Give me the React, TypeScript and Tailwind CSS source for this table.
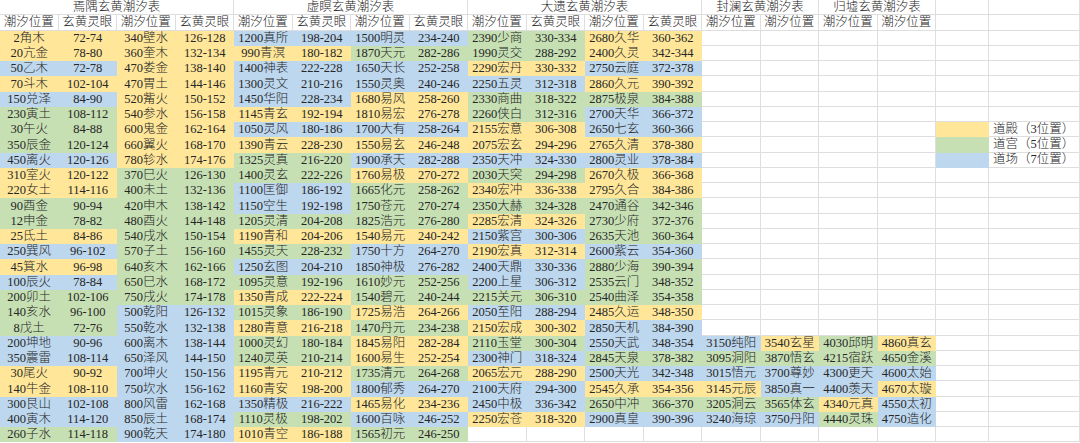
import React from 'react';

// 每行：名称 灵眼 颜色 名称 灵眼 颜色   (y=道殿 g=道宫 b=道场)
const yanyu = [
  '2角木 72-74 y 340壁水 126-128 y',
  '20亢金 78-80 y 360奎木 132-134 y',
  '50乙木 72-78 b 470娄金 138-140 y',
  '70斗木 102-104 y 470胃土 144-146 y',
  '150兑泽 84-90 b 520觜火 150-152 y',
  '230寅土 108-112 g 540参水 156-158 y',
  '30午火 84-88 g 600鬼金 162-164 y',
  '350辰金 120-124 g 660翼火 168-170 y',
  '450离火 120-126 b 780轸水 174-176 y',
  '310室火 120-122 y 370巳火 126-130 g',
  '220女土 114-116 y 400未土 132-136 g',
  '90酉金 90-94 g 420申木 138-142 g',
  '12申金 78-82 g 480酉火 144-148 g',
  '25氐土 84-86 y 540戌水 150-154 g',
  '250巽风 96-102 b 570子土 156-160 g',
  '45箕水 96-98 y 640亥木 162-166 g',
  '100辰火 78-84 b 650巳水 168-172 g',
  '200卯土 102-106 g 750戌火 174-178 g',
  '140亥水 96-100 g 500乾阳 126-132 b',
  '8戊土 72-76 g 550乾水 132-138 b',
  '200坤地 90-96 b 600离木 138-144 b',
  '350震雷 108-114 b 650泽风 144-150 b',
  '30尾火 90-92 y 700坤火 150-156 b',
  '140牛金 108-110 y 750坎水 156-162 b',
  '300艮山 102-108 b 800风雷 162-168 b',
  '400寅木 114-120 b 850辰土 168-174 b',
  '260子水 114-118 g 900乾天 174-180 b',
];

const xuming = [
  '1200真所 198-204 b 1500明灵 234-240 b',
  '990青溟 180-182 y 1870天元 282-286 g',
  '1400神表 222-228 b 1650天长 252-258 b',
  '1300灵文 210-216 b 1550灵奥 240-246 b',
  '1450华阳 228-234 b 1680易风 258-260 y',
  '1145青玄 192-194 y 1810易宏 276-278 y',
  '1050灵风 180-186 b 1700大有 258-264 b',
  '1390青云 228-230 y 1550易玄 246-248 y',
  '1325灵真 216-220 g 1900承天 282-288 b',
  '1400灵玄 222-226 g 1760易极 270-272 y',
  '1100匡御 186-192 b 1665化元 258-262 g',
  '1150空生 192-198 b 1750苍元 270-274 g',
  '1205灵清 204-208 g 1825浩元 276-280 g',
  '1190青和 204-206 y 1540易元 240-242 y',
  '1455灵天 228-232 g 1750十方 264-270 b',
  '1250玄图 204-210 b 1850神极 276-282 b',
  '1095灵意 192-196 g 1610妙元 252-256 g',
  '1350青成 222-224 y 1540碧元 240-244 g',
  '1015灵象 186-190 g 1725易浩 264-266 y',
  '1280青意 216-218 y 1470丹元 234-238 g',
  '1000灵幻 180-184 g 1845易阳 282-284 y',
  '1240灵英 210-214 g 1600易生 252-254 y',
  '1195青元 210-212 y 1735清元 264-268 g',
  '1160青安 198-200 y 1800郁秀 264-270 b',
  '1350精极 216-222 b 1465易化 234-236 y',
  '1110灵极 198-202 g 1600百咏 246-252 b',
  '1010青空 186-188 y 1565初元 246-250 g',
];

const dayi = [
  '2390少商 330-334 g 2680久华 360-362 y',
  '1990灵交 288-292 g 2400久灵 342-344 y',
  '2290宏丹 330-332 y 2750云庭 372-378 b',
  '2250五灵 312-318 b 2860久元 390-392 y',
  '2330商曲 318-322 g 2875极泉 384-388 g',
  '2260侠白 312-316 g 2700天华 366-372 b',
  '2155宏意 306-308 y 2650七玄 360-366 b',
  '2075宏玄 294-296 y 2765久清 378-380 y',
  '2350天冲 324-330 b 2800灵业 378-384 b',
  '2030天突 294-298 g 2670久极 366-368 y',
  '2340宏冲 336-338 y 2795久合 384-386 y',
  '2350大赫 324-328 g 2470通谷 342-346 g',
  '2285宏清 324-326 y 2730少府 372-376 g',
  '2150紫宫 300-306 b 2635天池 360-364 g',
  '2190宏真 312-314 y 2600紫云 354-360 b',
  '2400天鼎 330-336 b 2880少海 390-394 g',
  '2200上星 306-312 b 2535云门 348-352 g',
  '2215关元 306-310 g 2540曲泽 354-358 g',
  '2050至阳 288-294 b 2485久运 348-350 y',
  '2150宏成 300-302 y 2850天机 384-390 b',
  '2110玉堂 300-304 g 2550天武 348-354 b',
  '2300神门 318-324 b 2845天泉 378-382 g',
  '2065宏元 288-290 y 2500天光 342-348 b',
  '2100天府 294-300 b 2545久承 354-356 y',
  '2450中极 336-342 b 2650中冲 366-370 g',
  '2250宏苍 318-320 y 2900真皇 390-396 b',
  '',
];

// 封澜 / 归墟：从第21行开始
const fenglan = [
  '3150纯阳 b 3540玄星 y 4030邱明 g 4860真玄 y',
  '3095洞阳 g 3870悟玄 g 4215宿跃 g 4650金溪 g',
  '3015悟元 b 3700尊妙 b 4300更天 b 4600太始 b',
  '3145元辰 y 3850真一 b 4400羡天 b 4670太璇 y',
  '3205洞云 g 3565体玄 g 4340元真 y 4550太初 b',
  '3240海琼 b 3750丹阳 b 4440灵珠 g 4750造化 b',
];

const legend: Record<number, [string, string]> = {
  6: ['y', '道殿（3位置）'],
  7: ['g', '道宫（5位置）'],
  8: ['b', '道场（7位置）'],
};

const bg: Record<string, string> = {
  y: 'bg-[#ffe699]',
  g: 'bg-[#c6e0b4]',
  b: 'bg-[#bdd7ee]',
  w: 'bg-white border-r border-b border-[#dedede]',
};

const Cell: React.FC<{ t?: string; c?: string; left?: boolean; span?: string }> = ({ t = '', c = 'w', left, span = '' }) => (
  <div
    className={`flex items-center whitespace-nowrap overflow-visible ${left ? 'justify-start pl-1' : 'justify-center'} ${bg[c]} ${span}`}
  >
    {t}
  </div>
);

const pair = (row: string, key: string) => {
  if (!row) return [0, 1, 2, 3].map(i => <Cell key={key + i} />);
  const [n1, v1, c1, n2, v2, c2] = row.split(' ');
  return [
    <Cell key={key + 0} t={n1} c={c1} />,
    <Cell key={key + 1} t={v1} c={c1} />,
    <Cell key={key + 2} t={n2} c={c2} />,
    <Cell key={key + 3} t={v2} c={c2} />,
  ];
};

export default function App() {
  const rows: React.ReactNode[] = [];

  for (let r = 0; r < 27; r++) {
    rows.push(...pair(yanyu[r], `a${r}-`));
    rows.push(...pair(xuming[r], `b${r}-`));
    rows.push(...pair(dayi[r], `c${r}-`));

    const fl = r >= 20 ? fenglan[r - 20] : undefined;
    if (fl) {
      const p = fl.split(' ');
      for (let i = 0; i < 4; i++) rows.push(<Cell key={`d${r}-${i}`} t={p[i * 2]} c={p[i * 2 + 1]} />);
    } else {
      for (let i = 0; i < 4; i++) rows.push(<Cell key={`d${r}-${i}`} />);
    }

    const lg = legend[r];
    rows.push(<Cell key={`e${r}`} c={lg ? lg[0] : 'w'} />);
    rows.push(<Cell key={`f${r}`} t={lg ? lg[1] : ''} left />);
  }

  const head = ['潮汐位置', '玄黄灵眼', '潮汐位置', '玄黄灵眼'];

  return (
    <div className="w-[1080px] h-[443px] overflow-hidden bg-white text-[#262626] text-[12.5px] font-light leading-none font-['Liberation_Serif','Noto_Sans_CJK_SC',serif]">
      <div className="grid grid-cols-[repeat(16,58.5px)_53px_1fr] auto-rows-[15.25px]">
        {/* 标题行 */}
        <Cell t="焉隅玄黄潮汐表" span="col-span-4" />
        <Cell t="虚瞑玄黄潮汐表" span="col-span-4" />
        <Cell t="大遗玄黄潮汐表" span="col-span-4" />
        <Cell t="封澜玄黄潮汐表" span="col-span-2" />
        <Cell t="归墟玄黄潮汐表" span="col-span-2" />
        <Cell />
        <Cell />

        {/* 表头 */}
        {[0, 1, 2].map(s => head.map((h, i) => <Cell key={`h${s}${i}`} t={h} />))}
        {[0, 1, 2, 3].map(i => <Cell key={`hh${i}`} t="潮汐位置" />)}
        <Cell />
        <Cell />

        {rows}
      </div>
    </div>
  );
}
